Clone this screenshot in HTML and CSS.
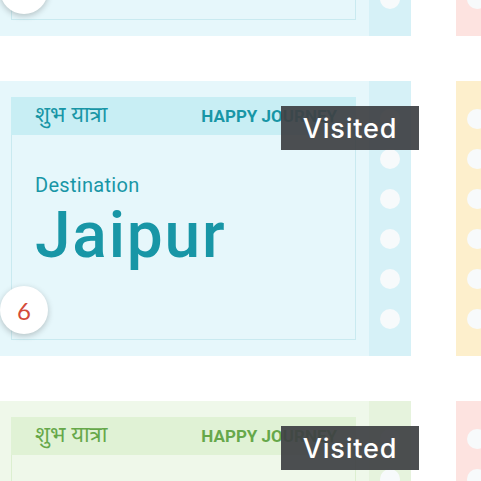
FILE: index.html
```html
<!DOCTYPE html>
<html lang="en">
<head>
<meta charset="utf-8">
<title>Tickets</title>
<link rel="stylesheet" href="styles.css">
</head>
<body>
<div class="grid">
  <div class="ticket blue">
    <div class="stub"><span></span><span></span><span></span><span></span><span></span><span></span></div>
    <div class="main">
      <div class="inner">
        <div class="head"><span class="hindi">शुभ यात्रा</span><span class="happy">HAPPY JOURNEY</span></div>
        <div class="content"><div class="label">Destination</div><div class="city">Agra</div></div>
      </div>
    </div>
    <div class="stub"><span></span><span></span><span></span><span></span><span></span><span></span></div>
    <div class="num">5</div>
  </div>
  <div class="ticket pink">
    <div class="stub"><span></span><span></span><span></span><span></span><span></span><span></span></div>
    <div class="main">
      <div class="inner">
        <div class="head"><span class="hindi">शुभ यात्रा</span><span class="happy">HAPPY JOURNEY</span></div>
        <div class="content"><div class="label">Destination</div><div class="city">Goa</div></div>
      </div>
    </div>
    <div class="stub"><span></span><span></span><span></span><span></span><span></span><span></span></div>
    <div class="num">8</div>
  </div>
  <div class="ticket blue">
    <div class="stub"><span></span><span></span><span></span><span></span><span></span><span></span></div>
    <div class="main">
      <div class="inner">
        <div class="head"><span class="hindi">शुभ यात्रा</span><span class="happy">HAPPY JOURNEY</span></div>
        <div class="content"><div class="label">Destination</div><div class="city">Jaipur</div></div>
      </div>
    </div>
    <div class="stub"><span></span><span></span><span></span><span></span><span></span><span></span></div>
    <div class="num">6</div>
    <div class="visited">Visited</div>
  </div>
  <div class="ticket yellow">
    <div class="stub"><span></span><span></span><span></span><span></span><span></span><span></span></div>
    <div class="main">
      <div class="inner">
        <div class="head"><span class="hindi">शुभ यात्रा</span><span class="happy">HAPPY JOURNEY</span></div>
        <div class="content"><div class="label">Destination</div><div class="city">Delhi</div></div>
      </div>
    </div>
    <div class="stub"><span></span><span></span><span></span><span></span><span></span><span></span></div>
    <div class="num">9</div>
  </div>
  <div class="ticket green">
    <div class="stub"><span></span><span></span><span></span><span></span><span></span><span></span></div>
    <div class="main">
      <div class="inner">
        <div class="head"><span class="hindi">शुभ यात्रा</span><span class="happy">HAPPY JOURNEY</span></div>
        <div class="content"><div class="label">Destination</div><div class="city">Kerala</div></div>
      </div>
    </div>
    <div class="stub"><span></span><span></span><span></span><span></span><span></span><span></span></div>
    <div class="num">7</div>
    <div class="visited">Visited</div>
  </div>
  <div class="ticket pink">
    <div class="stub"><span></span><span></span><span></span><span></span><span></span><span></span></div>
    <div class="main">
      <div class="inner">
        <div class="head"><span class="hindi">शुभ यात्रा</span><span class="happy">HAPPY JOURNEY</span></div>
        <div class="content"><div class="label">Destination</div><div class="city">Ladakh</div></div>
      </div>
    </div>
    <div class="stub"><span></span><span></span><span></span><span></span><span></span><span></span></div>
    <div class="num">10</div>
  </div>
</div>
</body>
</html>
```
FILE: styles.css
```css
html, body {
  margin: 0;
  padding: 0;
  background: #ffffff;
  overflow: hidden;
  width: 481px;
  height: 481px;
}
.grid {
  display: grid;
  grid-template-columns: 453px 453px;
  column-gap: 45px;
  row-gap: 45px;
  margin-top: -239px;
  margin-left: -42px;
  font-family: Roboto, "Liberation Sans", sans-serif;
}
.ticket {
  position: relative;
  display: flex;
  height: 275px;
  --body: #e6f7fb;
  --stub: #d6f1f7;
  --head: #c8eef4;
  --line: #c9eaf0;
  --ink: #1896a6;
}
.ticket.green {
  --body: #eff8ea;
  --stub: #e6f3dd;
  --head: #e0f2d5;
  --line: #dcefd0;
  --ink: #66a84a;
}
.ticket.yellow {
  --body: #fef3d6;
  --stub: #fdefcc;
  --head: #fbe7b4;
  --line: #f6e2b0;
  --ink: #d69a1a;
}
.ticket.pink {
  --body: #fdeae7;
  --stub: #fde3e0;
  --head: #f9d3ce;
  --line: #f5d2cd;
  --ink: #d44a3a;
}
.stub {
  width: 42px;
  flex: none;
  background: var(--stub);
  display: flex;
  flex-direction: column;
  align-items: center;
  gap: 20px;
  padding-top: 28px;
  box-sizing: border-box;
}
.stub span {
  width: 20px;
  height: 20px;
  border-radius: 50%;
  background: #f7fafb;
}
.main {
  width: 369px;
  flex: none;
  background: var(--body);
  padding: 16px 13px 16px 11px;
  box-sizing: border-box;
}
.inner {
  height: 100%;
  box-sizing: border-box;
  border: 1px solid var(--line);
  background: var(--body);
  display: flex;
  flex-direction: column;
}
.head {
  height: 38px;
  margin: -1px -1px 0 -1px;
  background: var(--head);
  display: flex;
  align-items: center;
  justify-content: space-between;
  padding: 0 19px 0 24px;
  color: var(--ink);
}
.hindi {
  font-family: "Noto Sans Devanagari", "Lohit Devanagari", "Noto Sans", sans-serif;
  font-size: 22px;
  font-weight: 400;
}
.happy {
  font-weight: 700;
  font-size: 17px;
  letter-spacing: 0;
}
.content {
  padding: 38px 0 0 23px;
  color: var(--ink);
}
.label {
  font-size: 20px;
  line-height: 24px;
  letter-spacing: 0.3px;
}
.city {
  margin-top: 8px;
  font-size: 64px;
  line-height: 62px;
  font-weight: 500;
  letter-spacing: 1.8px;
}
.num {
  position: absolute;
  left: 42px;
  top: 205px;
  width: 48px;
  height: 48px;
  border-radius: 50%;
  background: #ffffff;
  box-shadow: 0 2px 6px rgba(0, 0, 0, 0.22);
  color: #d44a3a;
  font-family: Lato, Roboto, sans-serif;
  font-size: 24px;
  display: flex;
  align-items: center;
  justify-content: center;
}
.visited {
  position: absolute;
  left: 323px;
  top: 25px;
  width: 138px;
  height: 44px;
  background: rgba(62, 65, 68, 0.93);
  color: #ffffff;
  font-family: Inter, "Open Sans", sans-serif;
  font-size: 27px;
  font-weight: 500;
  letter-spacing: 0.8px;
  display: flex;
  align-items: center;
  justify-content: center;
}
```
